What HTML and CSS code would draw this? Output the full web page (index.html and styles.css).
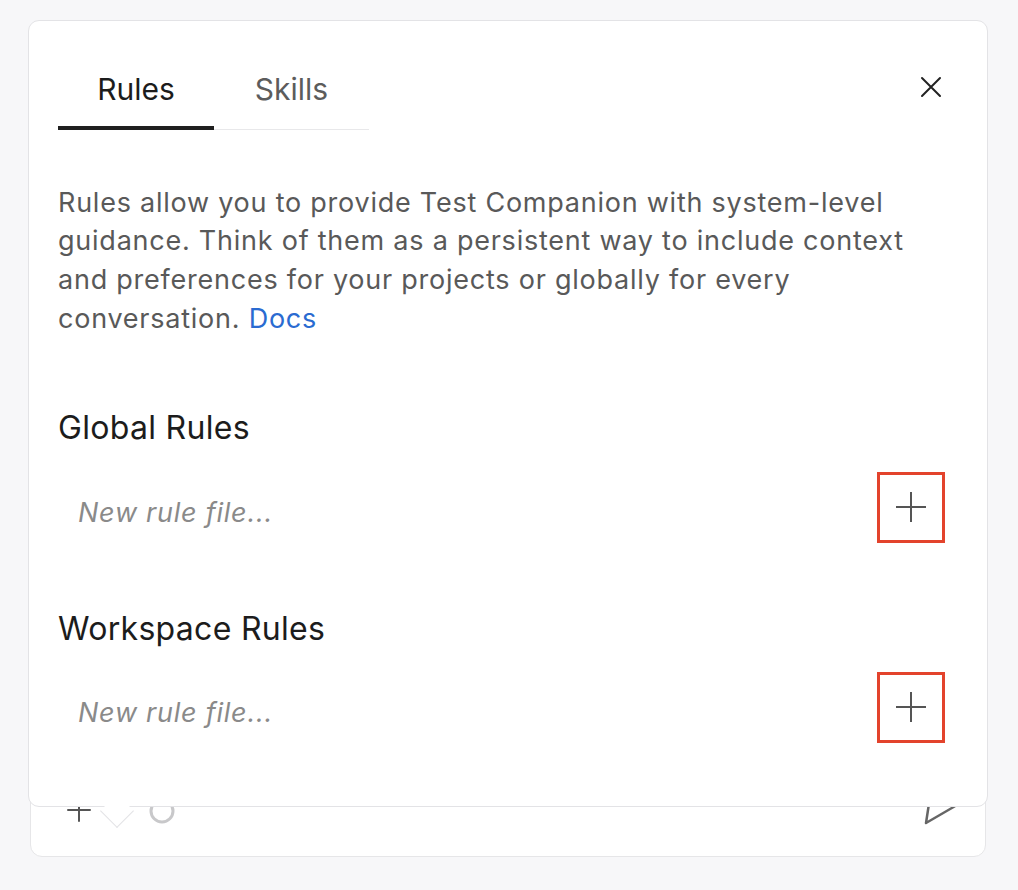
FILE: index.html
```html
<!DOCTYPE html>
<html lang="en">
<head>
<meta charset="utf-8">
<title>Rules</title>
<link rel="stylesheet" href="styles.css">
</head>
<body>
<div class="page">
  <div class="composer">
    <div class="composer-tools">
      <svg class="tool-icon" width="28" height="36" viewBox="0 0 28 36"><path d="M14 8v22M3 19h22" stroke="#555" stroke-width="2" fill="none" stroke-linecap="round"/></svg>
      <span class="tool-gap"></span>
      <svg class="tool-icon" width="28" height="36" viewBox="0 0 28 36"><circle cx="14" cy="20" r="11" stroke="#c8c8ca" stroke-width="3" fill="none"/></svg>
    </div>
    <svg class="send-icon" width="36" height="36" viewBox="0 0 36 36"><path d="M3 32 L7 6 L34 14 Z" stroke="#666" stroke-width="2.5" fill="none" stroke-linejoin="round"/></svg>
  </div>

  <div class="popover">
    <div class="tabs-row">
      <div class="tabs">
        <button class="tab active">Rules</button>
        <button class="tab">Skills</button>
      </div>
      <button class="close" aria-label="Close">
        <svg width="22" height="22" viewBox="0 0 22 22"><path d="M2 2L20 20M20 2L2 20" stroke="#222" stroke-width="2" stroke-linecap="round"/></svg>
      </button>
    </div>

    <p class="intro">Rules allow you to provide Test Companion with system-level guidance. Think of them as a persistent way to include context and preferences for your projects or globally for every conversation. <a class="docs" href="#">Docs</a></p>

    <section class="rule-section">
      <h2>Global Rules</h2>
      <div class="rule-row">
        <span class="placeholder">New rule file...</span>
        <button class="add"><svg width="34" height="34" viewBox="0 0 34 34"><path d="M17 2v30M2 17h30" stroke="#555" stroke-width="2"/></svg></button>
      </div>
    </section>

    <section class="rule-section">
      <h2>Workspace Rules</h2>
      <div class="rule-row">
        <span class="placeholder">New rule file...</span>
        <button class="add"><svg width="34" height="34" viewBox="0 0 34 34"><path d="M17 2v30M2 17h30" stroke="#555" stroke-width="2"/></svg></button>
      </div>
    </section>

    <span class="arrow"></span>
  </div>
</div>
</body>
</html>
```

FILE: styles.css
```css
* { box-sizing: border-box; }
html, body { margin: 0; padding: 0; }
body {
  background: #f7f7f9;
  font-family: Inter, "Open Sans", "Liberation Sans", sans-serif;
  width: 1018px;
  height: 890px;
  overflow: hidden;
}
.page {
  position: relative;
  width: 1018px;
  height: 890px;
  display: flex;
  flex-direction: column;
  justify-content: flex-end;
  padding: 0 32px 33px 30px;
}
.composer {
  height: 112px;
  background: #fff;
  border: 1.5px solid #e6e6e8;
  border-radius: 12px;
  display: flex;
  align-items: flex-end;
  justify-content: space-between;
  padding: 0 26px 29px 34px;
}
.composer-tools { display: flex; align-items: center; }
.tool-icon { display: block; }
.tool-gap { width: 55px; }
.send-icon { display: block; }

.popover {
  position: absolute;
  left: 28px;
  top: 20px;
  width: 960px;
  height: 787px;
  background: #fff;
  border: 1.5px solid #e3e3e6;
  border-radius: 11px;
  padding: 28.5px 29px 0 29px;
}
.tabs-row {
  display: flex;
  justify-content: space-between;
  align-items: flex-start;
}
.tabs { display: flex; align-items: flex-end; }
.tab {
  display: block;
  font-family: inherit;
  background: none;
  border: 0;
  border-bottom: 1.5px solid #e8e8ea;
  padding: 23px 0 23.5px;
  width: 155px;
  font-size: 30px;
  line-height: 32px;
  color: #5c5c5c;
  cursor: pointer;
}
.tab.active {
  color: #1c1c1c;
  border-bottom: 4px solid #1f1f1f;
  padding-bottom: 21px;
  width: 156px;
}
.close {
  background: none;
  border: 0;
  padding: 0;
  width: 22px;
  height: 22px;
  margin-top: 26px;
  margin-right: 16px;
  cursor: pointer;
}
.close svg { display: block; }

.intro {
  margin: 54px 0 0;
  font-size: 27px;
  letter-spacing: 0.76px;
  line-height: 38.7px;
  color: #595959;
  padding-right: 28px;
}
.docs { color: #2a6bd1; text-decoration: none; }

.rule-section { margin-top: 70px; }
.rule-section + .rule-section { margin-top: 66px; }
.rule-section h2 {
  margin: 0;
  font-weight: 400;
  font-size: 32px;
  letter-spacing: 0.3px;
  line-height: 40px;
  color: #1c1c1c;
}
.rule-row {
  margin-top: 23px;
  height: 72px;
  display: flex;
  align-items: center;
  justify-content: space-between;
  padding: 0 13px 0 20px;
}
.rule-section + .rule-section .rule-row { margin-top: 22px; }
.placeholder {
  font-style: italic;
  font-size: 27px;
  letter-spacing: 0.75px;
  color: #8a8a8a;
  padding-top: 10px;
}
.add {
  width: 68px;
  height: 71px;
  border: 3px solid #e3432c;
  background: #fff;
  display: flex;
  align-items: center;
  justify-content: center;
  padding: 0;
  cursor: pointer;
}
.add svg { display: block; }

.arrow {
  position: absolute;
  left: 76px;
  bottom: -17px;
  width: 24px;
  height: 24px;
  background: #fff;
  border-right: 1.5px solid #e3e3e6;
  border-bottom: 1.5px solid #e3e3e6;
  transform: rotate(45deg);
}
```
